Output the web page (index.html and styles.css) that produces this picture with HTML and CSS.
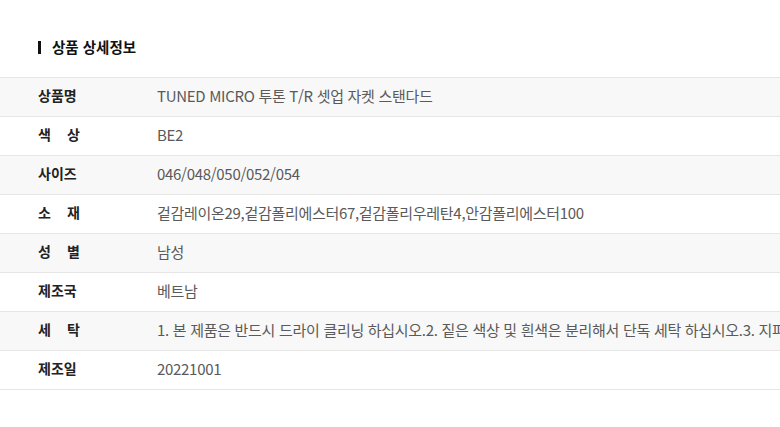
FILE: index.html
```html
<!DOCTYPE html>
<html lang="ko">
<head>
<meta charset="utf-8">
<link rel="stylesheet" href="styles.css">
</head>
<body>
<section class="detail">
  <h2 class="detail-title">상품 상세정보</h2>
  <div class="spec">
    <div class="row alt"><div class="label">상품명</div><div class="value">TUNED MICRO 투톤 T/R 셋업 자켓 스탠다드</div></div>
    <div class="row"><div class="label"><span class="spread">색 상</span></div><div class="value">BE2</div></div>
    <div class="row alt"><div class="label">사이즈</div><div class="value">046/048/050/052/054</div></div>
    <div class="row"><div class="label"><span class="spread">소 재</span></div><div class="value">겉감레이온29,겉감폴리에스터67,겉감폴리우레탄4,안감폴리에스터100</div></div>
    <div class="row alt"><div class="label"><span class="spread">성 별</span></div><div class="value">남성</div></div>
    <div class="row"><div class="label">제조국</div><div class="value">베트남</div></div>
    <div class="row alt"><div class="label"><span class="spread">세 탁</span></div><div class="value">1. 본 제품은 반드시 드라이 클리닝 하십시오.2. 짙은 색상 및 흰색은 분리해서 단독 세탁 하십시오.3. 지퍼,단추 등 부자재는 잠근 후 세탁하십시오.</div></div>
    <div class="row"><div class="label">제조일</div><div class="value">20221001</div></div>
  </div>
</section>
</body>
</html>
```

FILE: styles.css
```css
html, body {
  margin: 0;
  padding: 0;
  background: #fff;
}
body {
  font-family: "Noto Sans CJK KR", "Noto Sans", sans-serif;
  overflow: hidden;
  width: 780px;
}
.detail {
  padding-top: 37px;
}
.detail-title {
  margin: 0 0 20px 38px;
  display: flex;
  align-items: center;
  gap: 11px;
  font-size: 14.5px;
  line-height: 20px;
  font-weight: 700;
  color: #111;
}
.detail-title::before {
  content: "";
  width: 3px;
  height: 13px;
  background: #111;
}
.spec {
  border-top: 1px solid #e6e6e6;
}
.row {
  box-sizing: border-box;
  display: grid;
  grid-template-columns: 157px 1fr;
  height: 39px;
  padding-bottom: 4px;
  align-items: center;
  border-bottom: 1px solid #e6e6e6;
  white-space: nowrap;
}
.row.alt {
  background: #f8f8f8;
}
.label {
  padding-left: 38px;
  font-size: 14px;
  font-weight: 700;
  color: #222;
}
.spread {
  display: inline-block;
  width: 42px;
  text-align: justify;
  text-align-last: justify;
}
.value {
  overflow: hidden;
  font-size: 15px;
  letter-spacing: -0.3px;
  font-weight: 400;
  color: #5a5a5a;
}
```
